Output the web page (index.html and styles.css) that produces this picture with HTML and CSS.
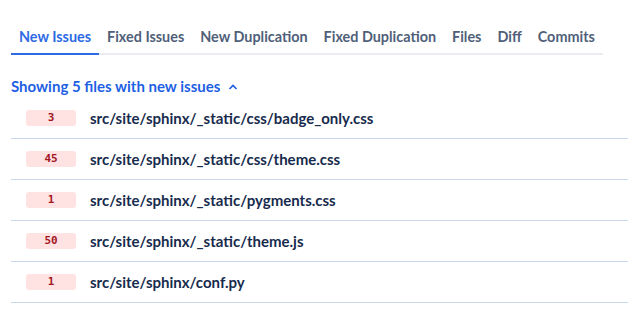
FILE: index.html
```html
<!DOCTYPE html>
<html>
  <head>
    <title>New Issues</title>
    <link rel="stylesheet" href="styles.css">
  </head>
  <body>
    <div class="page">
      <!-- Tabs -->
      <div class="tabs">
        <span class="tab active">New Issues</span>
        <span class="tab">Fixed Issues</span>
        <span class="tab">New Duplication</span>
        <span class="tab">Fixed Duplication</span>
        <span class="tab">Files</span>
        <span class="tab">Diff</span>
        <span class="tab">Commits</span>
      </div>

      <div class="summary">
        <span>Showing 5 files with new issues</span>
        <svg class="chevron" width="10" height="6" viewBox="0 0 10 6">
          <path d="M1.5 5 L5 1.5 L8.5 5" fill="none" stroke="currentColor" stroke-width="1.6"/>
        </svg>
      </div>

      <!-- File list -->
      <ul class="file-list">
        <li class="file-row"><span class="badge">3</span><span class="path">src/site/sphinx/_static/css/badge_only.css</span></li>
        <li class="file-row"><span class="badge">45</span><span class="path">src/site/sphinx/_static/css/theme.css</span></li>
        <li class="file-row"><span class="badge">1</span><span class="path">src/site/sphinx/_static/pygments.css</span></li>
        <li class="file-row"><span class="badge">50</span><span class="path">src/site/sphinx/_static/theme.js</span></li>
        <li class="file-row"><span class="badge">1</span><span class="path">src/site/sphinx/conf.py</span></li>
      </ul>
    </div>
  </body>
</html>
```
FILE: styles.css
```css
:root {
  --text: #172b4d;
  --muted: #505f79;
  --blue: #2d6be4;
  --row-border: #c9d8ef;
}

* {
  margin: 0;
  padding: 0;
  box-sizing: border-box;
}

body {
  font-family: Lato, "Noto Sans", sans-serif;
  color: var(--text);
  background: #fff;
}

.page {
  padding: 26px 0 0 11px;
}

/* Tabs */
.tabs {
  display: flex;
  width: fit-content;
  border-bottom: 2px solid #ebecf0;
}

.tab {
  padding: 2px 8px 7px;
  margin-bottom: -2px;
  font-size: 14.4px;
  line-height: 18px;
  font-weight: 700;
  color: var(--muted);
  border-bottom: 2px solid transparent;
}

.tab.active {
  color: var(--blue);
  border-bottom-color: var(--blue);
}

/* Summary toggle */
.summary {
  display: flex;
  align-items: center;
  gap: 8px;
  margin-top: 22px;
  font-size: 15px;
  line-height: 18px;
  font-weight: 700;
  color: #1e5fe3;
}

.chevron {
  margin-top: 1px;
}

/* File rows */
.file-list {
  list-style: none;
  margin-top: 3px;
}

.file-row {
  display: flex;
  align-items: center;
  gap: 14px;
  height: 41px;
  padding-left: 15px;
  border-bottom: 1px solid var(--row-border);
}

.badge {
  width: 50px;
  height: 16px;
  line-height: 16px;
  text-align: center;
  border-radius: 3px;
  background: #ffe3e3;
  color: #a3161f;
  font-family: "DejaVu Sans Mono", monospace;
  font-size: 11px;
  font-weight: 700;
}

.path {
  font-size: 15px;
  line-height: 18px;
  font-weight: 700;
  color: var(--text);
}
```
